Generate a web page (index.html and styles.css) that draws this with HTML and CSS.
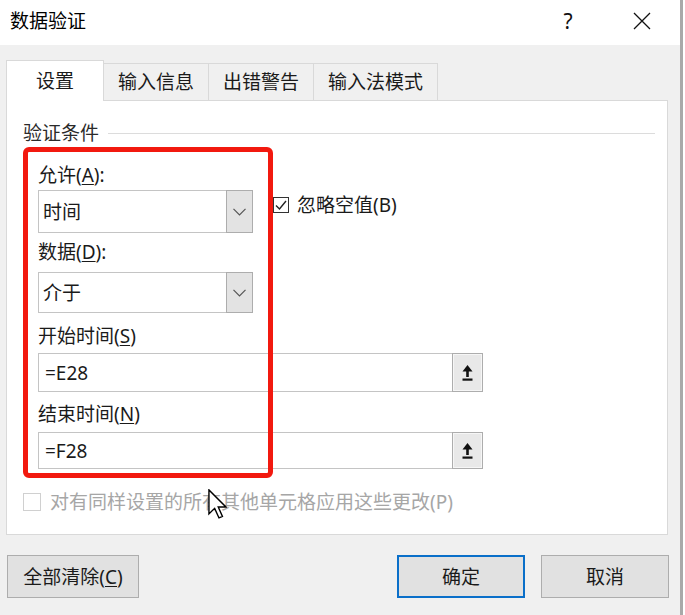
FILE: index.html
```html
<!DOCTYPE html>
<html lang="zh-CN">
<head>
<meta charset="utf-8">
<title>数据验证</title>
<link rel="stylesheet" href="styles.css">
</head>
<body>
<div class="window">
  <header class="titlebar">
    <span class="title">数据验证</span>
    <span class="help">?</span>
    <span class="close">
      <svg width="18" height="18" viewBox="0 0 18 18"><path d="M1 1 L17 17 M17 1 L1 17" stroke="#111" stroke-width="1.3" fill="none"/></svg>
    </span>
  </header>
  <main class="content">
    <nav class="tabs">
      <div class="tab active">设置</div>
      <div class="tab">输入信息</div>
      <div class="tab">出错警告</div>
      <div class="tab">输入法模式</div>
    </nav>
    <section class="panel">
      <div class="group-title"><span>验证条件</span><span class="rule"></span></div>
      <div class="form">
        <div class="label lbl-allow">允许(<u>A</u>):</div>
        <div class="row-allow">
          <div class="select sel-allow">
            <span class="value">时间</span>
            <span class="drop"><svg width="13" height="8" viewBox="0 0 13 8"><polyline points="0.5,0.8 6.5,6.8 12.5,0.8" stroke="#555" stroke-width="1.2" fill="none"/></svg></span>
          </div>
          <div class="check">
            <span class="box"><svg width="14" height="14" viewBox="0 0 14 14"><polyline points="2,7.5 5.5,11 12,3" stroke="#222" stroke-width="1.4" fill="none"/></svg></span>
            <span>忽略空值(B)</span>
          </div>
        </div>
        <div class="label lbl-data">数据(<u>D</u>):</div>
        <div class="select sel-data">
          <span class="value">介于</span>
          <span class="drop"><svg width="13" height="8" viewBox="0 0 13 8"><polyline points="0.5,0.8 6.5,6.8 12.5,0.8" stroke="#555" stroke-width="1.2" fill="none"/></svg></span>
        </div>
        <div class="label lbl-start">开始时间(<u>S</u>)</div>
        <div class="input inp-start">
          <span class="value">=E28</span>
          <span class="ref"><svg width="11" height="18" viewBox="0 0 11 18"><polygon points="0.5,7.5 5.5,1 10.5,7.5" fill="#111"/><rect x="4.2" y="7" width="2.6" height="6" fill="#111"/><rect x="0.5" y="14.5" width="10" height="2.2" fill="#111"/></svg></span>
        </div>
        <div class="label lbl-end">结束时间(<u>N</u>)</div>
        <div class="input inp-end">
          <span class="value">=F28</span>
          <span class="ref"><svg width="11" height="18" viewBox="0 0 11 18"><polygon points="0.5,7.5 5.5,1 10.5,7.5" fill="#111"/><rect x="4.2" y="7" width="2.6" height="6" fill="#111"/><rect x="0.5" y="14.5" width="10" height="2.2" fill="#111"/></svg></span>
        </div>
      </div>
      <div class="apply-all">
        <span class="box disabled"></span>
        <span>对有同样设置的所有其他单元格应用这些更改(P)</span>
      </div>
      <div class="annotation"></div>
      <svg class="cursor" width="19" height="30" viewBox="0 0 12.6 20"><path d="M0.6 0.6 L0.6 16.6 L4.4 12.9 L7.3 19.3 L9.6 18.3 L6.8 12 L11.9 12 Z" fill="#fff" stroke="#000" stroke-width="1.4" vector-effect="non-scaling-stroke" stroke-linejoin="miter"/></svg>
    </section>
    <footer class="buttons">
      <div class="btn btn-clear">全部清除(<u>C</u>)</div>
      <div class="btn btn-ok">确定</div>
      <div class="btn btn-cancel">取消</div>
    </footer>
  </main>
</div>
</body>
</html>
```
FILE: styles.css
```css
* { box-sizing: border-box; margin: 0; padding: 0; }
html, body { width: 685px; height: 615px; overflow: hidden; background: #fff; }
body {
  font-family: "Noto Sans", "Noto Sans CJK SC", sans-serif;
  font-size: 19px;
  line-height: 24px;
  color: #1a1a1a;
}
u { text-decoration: underline; text-underline-offset: 2px; text-decoration-thickness: 1px; }

.window {
  width: 683px;
  height: 615px;
  background: #f0f0f0;
  border-right: 3px solid #a9a9a9;
  display: flex;
  flex-direction: column;
}

.titlebar {
  height: 45px;
  flex: none;
  background: #fff;
  display: flex;
  align-items: center;
  padding-left: 10px;
  padding-bottom: 3px;
}
.title { flex: 1; color: #000; font-size: 19px; }
.help { width: 20px; text-align: center; font-size: 21px; color: #111; margin-right: 52px; }
.close {
  width: 24px; height: 24px; margin-right: 26px;
  display: flex; align-items: center; justify-content: center;
}

.content {
  flex: 1;
  padding: 15px 12px 0 6px;
  display: flex;
  flex-direction: column;
}

.tabs { display: flex; align-items: flex-end; height: 40px; flex: none; }
.tab {
  height: 37px;
  padding: 0 14px;
  border: 1px solid #d9d9d9;
  border-bottom: none;
  margin-left: -1px;
  background: #f0f0f0;
  display: flex; align-items: center; justify-content: center;
}
.tab.active {
  height: 41px;
  margin-left: 0;
  margin-bottom: -1px;
  padding: 0 29px;
  background: #fff;
  position: relative;
  z-index: 1;
}

.panel {
  height: 435px;
  flex: none;
  background: #fff;
  border: 1px solid #d9d9d9;
  position: relative;
  padding: 20px 12px 0 16px;
}

.group-title { display: flex; align-items: center; height: 24px; color: #2a2a2a; }
.group-title .rule { flex: 1; height: 1px; background: #dcdcdc; margin-left: 9px; }

.form { margin-left: 15px; display: flex; flex-direction: column; align-items: flex-start; }
.label { height: 24px; }
.lbl-allow { margin-top: 18px; }
.lbl-data { margin-top: 7px; }
.lbl-start { margin-top: 11px; }
.lbl-end { margin-top: 10px; }

.row-allow { margin-top: 3px; display: flex; }

.select {
  display: flex;
  width: 215px;
  border: 1px solid #c4c4c4;
  background: #fff;
}
.sel-allow { height: 43px; }
.sel-data { height: 41px; margin-top: 8px; }
.select .value { flex: 1; display: flex; align-items: center; padding-left: 4px; }
.select .drop {
  width: 27px;
  background: #e3e3e3;
  border: 1px solid #adadad;
  margin: -1px -1px -1px 0;
  display: flex; align-items: center; justify-content: center;
}

.check {
  margin-left: 20px;
  margin-top: 7px;
  height: 16px;
  display: flex;
  align-items: center;
  gap: 8px;
}
.box {
  width: 16px; height: 16px;
  border: 1px solid #333;
  background: #fff;
  display: flex; align-items: center; justify-content: center;
  flex: none;
}

.input {
  display: flex;
  width: 445px;
  border: 1px solid #c4c4c4;
  background: #fff;
}
.inp-start { height: 39px; margin-top: 5px; }
.inp-end { height: 37px; margin-top: 6px; }
.input .value { flex: 1; display: flex; align-items: center; padding-left: 6px; }
.input .ref {
  width: 31px;
  background: #e8e8e8;
  border: 1px solid #adadad;
  box-shadow: inset 0 0 0 1px #f6f6f6;
  margin: -1px -1px -1px 0;
  display: flex; align-items: center; justify-content: center;
}

.apply-all {
  margin-top: 21px;
  height: 24px;
  display: flex;
  align-items: center;
  gap: 9px;
  color: #a6a6a6;
}
.box.disabled { width: 18px; height: 18px; border-color: #d0d0d0; }

.annotation {
  position: absolute;
  left: 16px;
  top: 46px;
  width: 250px;
  height: 331px;
  border: 5px solid #f2190f;
  border-radius: 6px;
}
.cursor { position: absolute; left: 201px; top: 388px; }

.buttons { margin-top: 20px; display: flex; height: 43px; flex: none; }
.btn {
  width: 128px;
  height: 43px;
  border: 1px solid #adadad;
  background: #e1e1e1;
  display: flex; align-items: center; justify-content: center;
  color: #1a1a1a;
}
.btn-clear { width: 132px; margin-left: 1px; }
.btn-ok { margin-left: auto; border: 2px solid #0a6fc9; }
.btn-cancel { margin-left: 16px; margin-right: -1px; }
```
